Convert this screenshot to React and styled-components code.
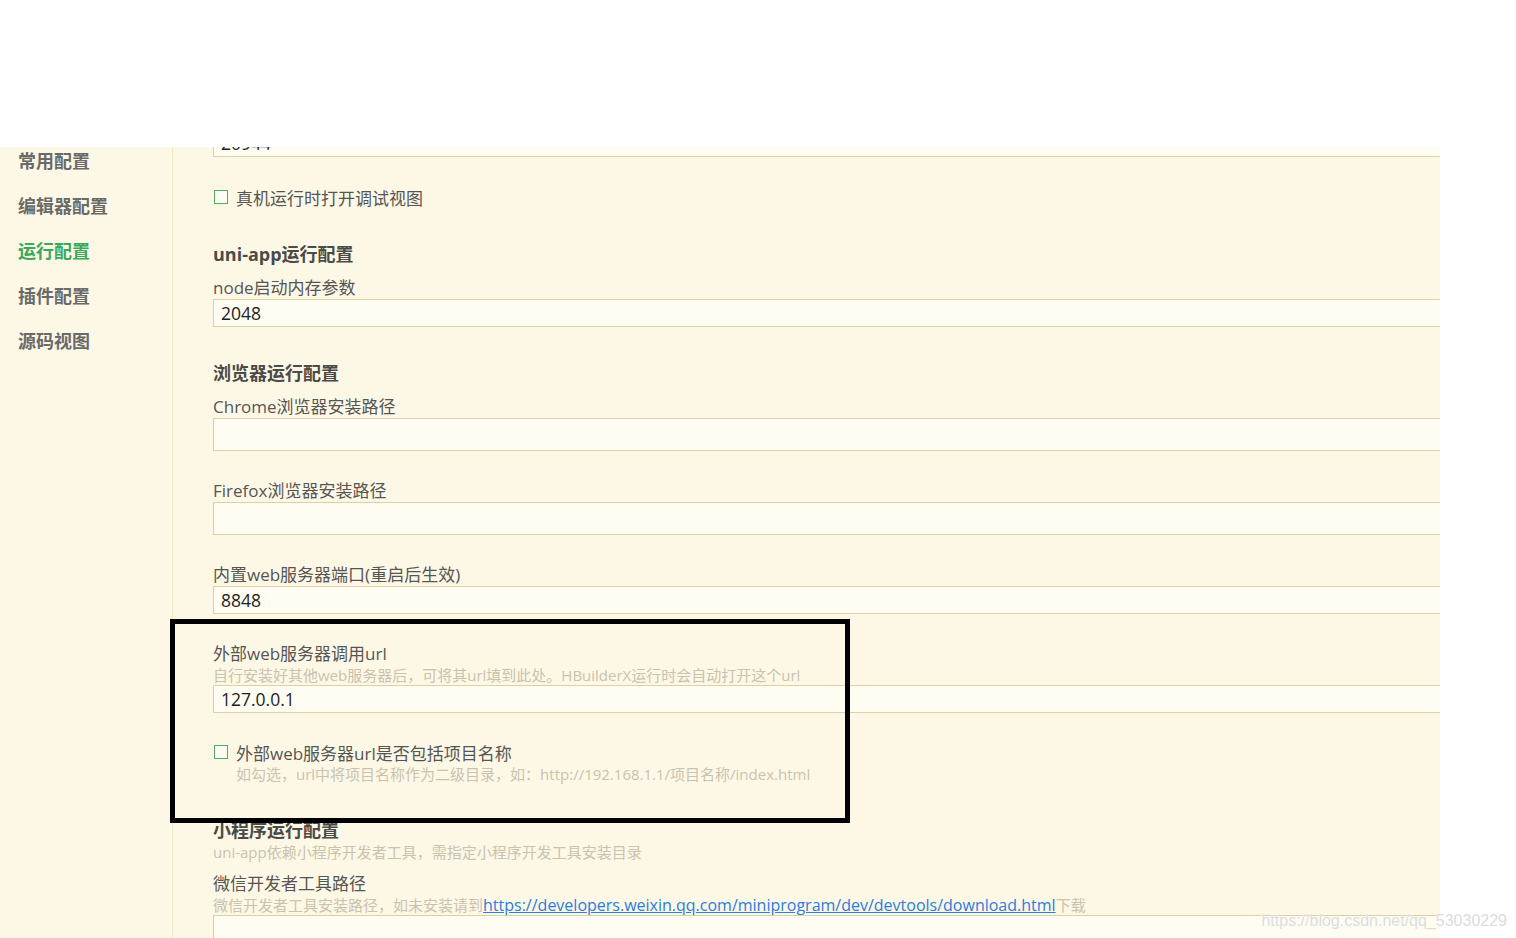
import React, { useLayoutEffect, useRef } from "react";
import styled, { createGlobalStyle } from "styled-components";

const Global = createGlobalStyle`
  html, body { margin: 0; padding: 0; background: #ffffff; }
  body { font-family: "Open Sans", "Noto Sans CJK SC", sans-serif; }
  * { box-sizing: border-box; }
`;

const FONT = `"Open Sans", "Noto Sans CJK SC", sans-serif`;

const Page = styled.div`
  position: relative;
  width: 100%;
  height: 938px;
  overflow: hidden;
  display: flex;
  flex-direction: column;
  background: #ffffff;
`;

const TopBlank = styled.div`
  height: 147px;
  flex: none;
`;

const Main = styled.div`
  flex: 1;
  width: 1440px;
  display: flex;
  background: #fdf8e6;
  overflow: hidden;
`;

const Sidebar = styled.nav`
  width: 173px;
  flex: none;
  border-right: 1px solid #f1e7c9;
  padding: 2px 0 0 18px;
  display: flex;
  flex-direction: column;
  gap: 21px;
`;

const NavItem = styled.div`
  font-family: ${FONT};
  font-size: 18px;
  line-height: 24px;
  font-weight: 700;
  color: ${(p) => (p.$active ? "#3aa95a" : "#6a6a68")};
`;

const Content = styled.div`
  flex: 1;
  overflow: hidden;
  padding-left: 40px;
`;

const Column = styled.div`
  display: flex;
  flex-direction: column;
  padding-bottom: 60px;
  font-family: ${FONT};
`;

const Input = styled.input`
  display: block;
  width: calc(100% + 6px);
  height: ${(p) => (p.$tall ? "33px" : "28px")};
  margin: 0;
  margin-top: ${(p) => p.$mt || 0}px;
  border: 1px solid #ddd0a4;
  background: #fffcf2;
  padding: 0 7px;
  font-family: ${FONT};
  font-size: 17.5px;
  color: #1e1e1e;
  outline: none;
`;

const CheckRow = styled.label`
  display: flex;
  align-items: center;
  height: 24px;
  margin-top: ${(p) => p.$mt || 0}px;
  font-size: 17px;
  color: #555553;
`;

const Box = styled.span`
  width: 14px;
  height: 14px;
  flex: none;
  margin-left: 1px;
  margin-right: 8px;
  border: 1.5px solid #4fae66;
  background: #fffcf2;
`;

const Heading = styled.div`
  margin-top: ${(p) => p.$mt || 0}px;
  font-size: 18px;
  line-height: 24px;
  font-weight: 700;
  color: #4a4a48;
`;

const Label = styled.div`
  margin-top: ${(p) => p.$mt || 0}px;
  font-size: 17px;
  line-height: 22px;
  color: #555553;
  white-space: nowrap;
`;

const Hint = styled.div`
  margin-top: ${(p) => p.$mt || 0}px;
  padding-left: ${(p) => (p.$indent ? "23px" : "0")};
  font-size: 15px;
  line-height: 20px;
  color: #c9c2ae;
  white-space: nowrap;
`;

const Link = styled.a`
  font-size: 16px;
  color: #2a7de1;
  text-decoration: underline;
`;

const Annotation = styled.div`
  position: absolute;
  left: 170px;
  top: 619px;
  width: 680px;
  height: 204px;
  border: 5px solid #000000;
  pointer-events: none;
`;

const Watermark = styled.div`
  position: absolute;
  right: 9px;
  bottom: 8px;
  font-family: "Liberation Sans", Arial, sans-serif;
  font-size: 16px;
  color: #dcdcdc;
  text-shadow: 0 0 1px #ffffff, 0 0 1px #ffffff;
  pointer-events: none;
`;

export default function App() {
  const ref = useRef(null);
  useLayoutEffect(() => {
    if (ref.current) ref.current.scrollTop = 18;
  }, []);

  return (
    <>
      <Global />
      <Page>
        <TopBlank />
        <Main>
          <Sidebar>
            <NavItem>常用配置</NavItem>
            <NavItem>编辑器配置</NavItem>
            <NavItem $active>运行配置</NavItem>
            <NavItem>插件配置</NavItem>
            <NavItem>源码视图</NavItem>
          </Sidebar>
          <Content ref={ref}>
            <Column>
              <Input readOnly value="20944" />
              <CheckRow $mt={28}>
                <Box />
                真机运行时打开调试视图
              </CheckRow>

              <Heading $mt={33}>uni-app运行配置</Heading>
              <Label $mt={11}>node启动内存参数</Label>
              <Input readOnly value="2048" />

              <Heading $mt={34}>浏览器运行配置</Heading>
              <Label $mt={11}>Chrome浏览器安装路径</Label>
              <Input readOnly value="" $tall />
              <Label $mt={29}>Firefox浏览器安装路径</Label>
              <Input readOnly value="" $tall />
              <Label $mt={29}>内置web服务器端口(重启后生效)</Label>
              <Input readOnly value="8848" />

              <Label $mt={29}>外部web服务器调用url</Label>
              <Hint>自行安装好其他web服务器后，可将其url填到此处。HBuilderX运行时会自动打开这个url</Hint>
              <Input readOnly value="127.0.0.1" />
              <CheckRow $mt={27}>
                <Box />
                外部web服务器url是否包括项目名称
              </CheckRow>
              <Hint $indent>如勾选，url中将项目名称作为二级目录，如：http://192.168.1.1/项目名称/index.html</Hint>

              <Heading $mt={34}>小程序运行配置</Heading>
              <Hint>uni-app依赖小程序开发者工具，需指定小程序开发工具安装目录</Hint>
              <Label $mt={11}>微信开发者工具路径</Label>
              <Hint>
                微信开发者工具安装路径，如未安装请到
                <Link href="#">https://developers.weixin.qq.com/miniprogram/dev/devtools/download.html</Link>
                下载
              </Hint>
              <Input readOnly value="" $tall />
            </Column>
          </Content>
        </Main>
        <Annotation />
        <Watermark>https://blog.csdn.net/qq_53030229</Watermark>
      </Page>
    </>
  );
}
